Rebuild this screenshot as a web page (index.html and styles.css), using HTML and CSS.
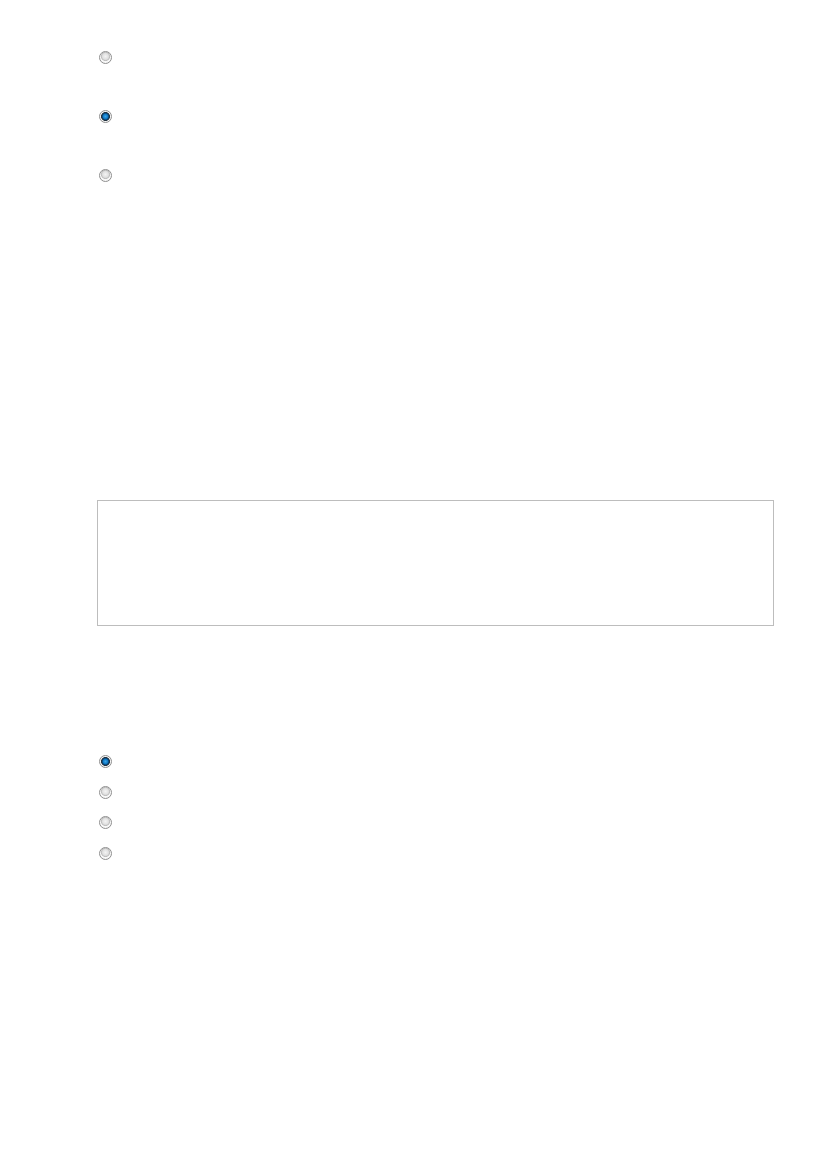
FILE: index.html
```html
<!DOCTYPE html>
<html lang="en">
<head>
    <meta charset="UTF-8">
    <meta name="viewport" content="width=device-width, initial-scale=1.0">
    <title>Form</title>
    <link rel="stylesheet" href="styles.css">
</head>
<body>
    <div class="page">
        <div class="choice-group spaced">
            <label class="choice"><input type="radio" name="first" value="a"></label>
            <label class="choice"><input type="radio" name="first" value="b" checked></label>
            <label class="choice"><input type="radio" name="first" value="c"></label>
        </div>

        <div class="text-box"></div>

        <div class="choice-group compact">
            <label class="choice"><input type="radio" name="second" value="1" checked></label>
            <label class="choice"><input type="radio" name="second" value="2"></label>
            <label class="choice"><input type="radio" name="second" value="3"></label>
            <label class="choice"><input type="radio" name="second" value="4"></label>
        </div>
    </div>
</body>
</html>
```

FILE: styles.css
```css
body {
    font-family: 'Liberation Sans', Arial, sans-serif;
    background-color: #fff;
    margin: 0;
    padding: 0;
}
.page {
    padding: 51px 0 0 97px;
    width: 677px;
}
.choice-group {
    display: flex;
    flex-direction: column;
    padding-left: 2px;
}
.spaced {
    gap: 46px;
}
.compact {
    margin-top: 129px;
    gap: 17.67px;
}
.choice {
    display: flex;
    height: 13px;
}
input[type="radio"] {
    appearance: none;
    -webkit-appearance: none;
    margin: 0;
    width: 13px;
    height: 13px;
    border-radius: 50%;
    border: 1px solid #8f8f8f;
    box-sizing: border-box;
    background: radial-gradient(circle at 50% 40%, #f4f4f4 0, #e0e0e0 3px, #bdbdbd 4.2px, #f8f8f8 4.9px);
}
input[type="radio"]:checked {
    background: radial-gradient(circle at 50% 50%, #3aa6e8 0, #0f78c4 2.3px, #0b3c66 3.4px, #22303c 4.1px, #f6f6f6 4.8px);
}
.text-box {
    margin-top: 318px;
    height: 126px;
    border: 1px solid #bdbdbd;
    box-sizing: border-box;
}
```
